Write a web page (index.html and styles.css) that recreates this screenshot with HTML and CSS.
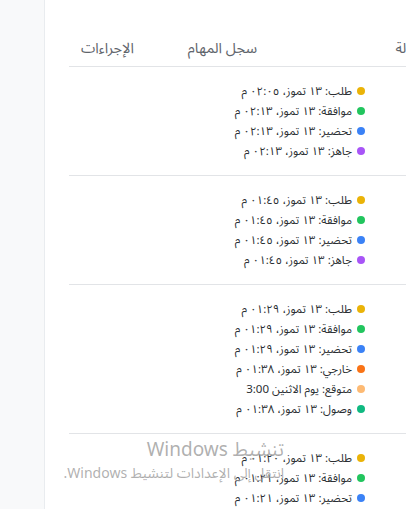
FILE: index.html
```html
<!DOCTYPE html>
<html lang="ar">
<head>
<meta charset="utf-8">
<link rel="stylesheet" href="styles.css">
</head>
<body>
<div class="layout">
  <aside class="side"></aside>
  <main class="main">
    <div class="table" dir="rtl">
      <div class="thead">
        <div class="th th-status">الحالة</div>
        <div class="th th-log">سجل المهام</div>
        <div class="th th-actions">الإجراءات</div>
      </div>
      <div class="row">
        <ul class="log">
          <li><span class="dot yellow"></span>طلب: ١٣ تموز، ٠٢:٠٥ م</li>
          <li><span class="dot green"></span>موافقة: ١٣ تموز، ٠٢:١٣ م</li>
          <li><span class="dot blue"></span>تحضير: ١٣ تموز، ٠٢:١٣ م</li>
          <li><span class="dot purple"></span>جاهز: ١٣ تموز، ٠٢:١٣ م</li>
        </ul>
      </div>
      <div class="row">
        <ul class="log">
          <li><span class="dot yellow"></span>طلب: ١٣ تموز، ٠١:٤٥ م</li>
          <li><span class="dot green"></span>موافقة: ١٣ تموز، ٠١:٤٥ م</li>
          <li><span class="dot blue"></span>تحضير: ١٣ تموز، ٠١:٤٥ م</li>
          <li><span class="dot purple"></span>جاهز: ١٣ تموز، ٠١:٤٥ م</li>
        </ul>
      </div>
      <div class="row">
        <ul class="log">
          <li><span class="dot yellow"></span>طلب: ١٣ تموز، ٠١:٢٩ م</li>
          <li><span class="dot green"></span>موافقة: ١٣ تموز، ٠١:٢٩ م</li>
          <li><span class="dot blue"></span>تحضير: ١٣ تموز، ٠١:٢٩ م</li>
          <li><span class="dot orange"></span>خارجي: ١٣ تموز، ٠١:٣٨ م</li>
          <li><span class="dot peach"></span>متوقع: يوم الاثنين 3:00</li>
          <li><span class="dot emerald"></span>وصول: ١٣ تموز، ٠١:٣٨ م</li>
        </ul>
      </div>
      <div class="row">
        <ul class="log">
          <li><span class="dot yellow"></span>طلب: ١٣ تموز، ٠١:٢٠ م</li>
          <li><span class="dot green"></span>موافقة: ١٣ تموز، ٠١:٢١ م</li>
          <li><span class="dot blue"></span>تحضير: ١٣ تموز، ٠١:٢١ م</li>
          <li><span class="dot purple"></span>جاهز: ١٣ تموز، ٠١:٢١ م</li>
        </ul>
      </div>
    </div>
  </main>
</div>
<div class="watermark" dir="rtl">
  <div class="wm-title">تنشيط Windows</div>
  <div class="wm-sub">انتقل إلى الإعدادات لتنشيط Windows.</div>
</div>
</body>
</html>
```
FILE: styles.css
```css
html, body {
  margin: 0;
  padding: 0;
  height: 100%;
  overflow: hidden;
  background: #fff;
  font-family: "Noto Sans", "Noto Sans Arabic", "DejaVu Sans", sans-serif;
}

.layout {
  display: flex;
  height: 100%;
}

.side {
  width: 44px;
  flex: none;
  background: #f8f9fa;
  border-right: 1px solid #e9ecef;
}

.main {
  flex: 1;
  min-width: 0;
  padding-left: 24px;
  overflow: hidden;
}

.table {
  width: 370px;
}

.thead {
  display: flex;
  height: 67px;
  box-sizing: border-box;
  padding: 36px 12px 0 0;
  border-bottom: 1px solid #e2e4e7;
  color: #5f656c;
  font-size: 14.5px;
  line-height: 22px;
}

.th-status { width: 170px; flex: none; }
.th-log { width: 123px; flex: none; }
.th-actions { flex: 1; }

.row {
  padding: 14px 74px 14px 0;
  border-bottom: 1px solid #e2e4e7;
}

.log {
  list-style: none;
  margin: 0;
  padding: 0;
  font-size: 11.5px;
  line-height: 20px;
  color: #2b2f33;
}

.log li {
  display: flex;
  align-items: center;
  white-space: nowrap;
}

.dot {
  width: 8px;
  height: 8px;
  border-radius: 50%;
  margin-left: 5px;
  flex: none;
}

.yellow { background: #eab308; }
.green { background: #22c55e; }
.blue { background: #3b82f6; }
.purple { background: #a855f7; }
.orange { background: #f97316; }
.peach { background: #fdba74; }
.emerald { background: #10b981; }

.watermark {
  position: absolute;
  right: 122px;
  top: 437px;
  color: rgba(150, 150, 150, 0.75);
  text-align: right;
  pointer-events: none;
}

.wm-title {
  font-size: 19px;
  line-height: 25px;
}

.wm-sub {
  font-size: 14px;
  line-height: 22px;
}
```
